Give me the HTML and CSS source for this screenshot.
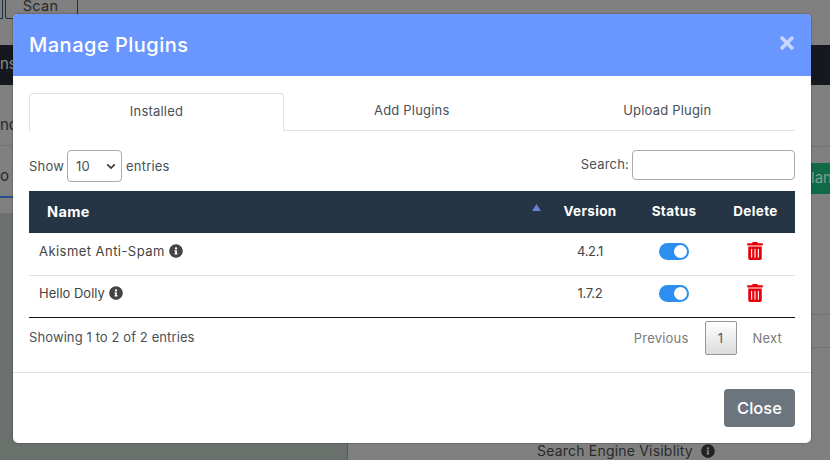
FILE: index.html
```html
<!DOCTYPE html>
<html lang="en">
<head>
<meta charset="utf-8">
<title>Manage Plugins</title>
<link rel="stylesheet" href="styles.css">
</head>
<body>
<div class="page">
  <div class="topbar"><span class="edge-btn"></span><button class="scan-btn">Scan</button></div>
  <div class="navbar">ns</div>
  <div class="content">
    <div class="left">
      <div class="left-row row-a">nc</div>
      <div class="left-row row-b">o</div>
      <div class="left-fill"></div>
    </div>
    <div class="right">
      <div class="right-row r1"><span class="green">lan</span></div>
      <div class="right-row r2"></div>
      <div class="right-row r3"></div>
      <div class="seo">Search Engine Visiblity
        <svg class="info" viewBox="0 0 512 512"><use href="#i-info"/></svg>
      </div>
    </div>
  </div>
</div>

<svg class="defs" width="0" height="0">
  <defs>
    <path id="i-info" d="M256 8C119 8 8 119 8 256s111 248 248 248 248-111 248-248S393 8 256 8zm0 110c23.196 0 42 18.804 42 42s-18.804 42-42 42-42-18.804-42-42 18.804-42 42-42zm56 254c0 6.627-5.373 12-12 12h-88c-6.627 0-12-5.373-12-12v-24c0-6.627 5.373-12 12-12h12v-64h-12c-6.627 0-12-5.373-12-12v-24c0-6.627 5.373-12 12-12h64c6.627 0 12 5.373 12 12v100h12c6.627 0 12 5.373 12 12v24z"/>
    <path id="i-trash" d="M32 464a48 48 0 0 0 48 48h288a48 48 0 0 0 48-48V128H32zm272-256a16 16 0 0 1 32 0v224a16 16 0 0 1-32 0zm-96 0a16 16 0 0 1 32 0v224a16 16 0 0 1-32 0zm-96 0a16 16 0 0 1 32 0v224a16 16 0 0 1-32 0zM432 32H312l-9.4-18.7A24 24 0 0 0 281.1 0H166.8a23.72 23.72 0 0 0-21.4 13.3L136 32H16A16 16 0 0 0 0 48v32a16 16 0 0 0 16 16h416a16 16 0 0 0 16-16V48a16 16 0 0 0-16-16z"/>
  </defs>
</svg>

<div class="modal">
  <header class="modal-head">
    <h5 class="modal-title">Manage Plugins</h5>
    <svg class="close-x" viewBox="0 0 352 512"><path d="M242.72 256l100.07-100.07c12.28-12.28 12.28-32.19 0-44.48l-22.24-22.24c-12.28-12.28-32.19-12.28-44.48 0L176 189.28 75.93 89.21c-12.28-12.28-32.19-12.28-44.48 0L9.21 111.45c-12.28 12.28-12.28 32.19 0 44.48L109.28 256 9.21 356.07c-12.28 12.28-12.28 32.19 0 44.48l22.24 22.24c12.28 12.28 32.2 12.28 44.48 0L176 322.72l100.07 100.07c12.28 12.28 32.2 12.28 44.48 0l22.24-22.24c12.28-12.28 12.28-32.19 0-44.48L242.72 256z"/></svg>
  </header>
  <div class="modal-body">
    <nav class="tabs">
      <a class="tab active">Installed</a>
      <a class="tab">Add Plugins</a>
      <a class="tab">Upload Plugin</a>
    </nav>
    <div class="controls">
      <label class="length">Show
        <span class="select">10
          <svg class="chev" viewBox="0 0 12 8"><path d="M1.5 1.5 6 6l4.5-4.5" fill="none" stroke="#3a3a3a" stroke-width="2"/></svg>
        </span>
        entries</label>
      <label class="search"><span class="search-label">Search:</span><input class="search-input" type="text"></label>
    </div>
    <table class="plugins">
      <colgroup><col class="c-name"><col class="c-ver"><col class="c-stat"><col class="c-del"></colgroup>
      <thead>
        <tr>
          <th class="th-name">Name<svg class="sort" viewBox="0 0 10 8"><path d="M5 0l5 8H0z"/></svg></th>
          <th>Version</th><th>Status</th><th>Delete</th>
        </tr>
      </thead>
      <tbody>
        <tr>
          <td class="td-name wide">Akismet Anti-Spam <svg class="info" viewBox="0 0 512 512"><use href="#i-info"/></svg></td>
          <td class="center ver">4.2.1</td>
          <td class="center"><span class="toggle"></span></td>
          <td class="center"><svg class="trash" viewBox="0 0 448 512"><use href="#i-trash"/></svg></td>
        </tr>
        <tr>
          <td class="td-name tight">Hello Dolly <svg class="info" viewBox="0 0 512 512"><use href="#i-info"/></svg></td>
          <td class="center ver">1.7.2</td>
          <td class="center"><span class="toggle"></span></td>
          <td class="center"><svg class="trash" viewBox="0 0 448 512"><use href="#i-trash"/></svg></td>
        </tr>
      </tbody>
    </table>
    <div class="table-foot">
      <span class="summary">Showing 1 to 2 of 2 entries</span>
      <div class="pager">
        <span class="pg">Previous</span>
        <span class="pg-num">1</span>
        <span class="pg">Next</span>
      </div>
    </div>
  </div>
  <footer class="modal-foot"><button class="close-btn">Close</button></footer>
</div>
</body>
</html>
```
FILE: styles.css
```css
* { box-sizing: border-box; }
html, body { margin: 0; height: 100%; overflow: hidden; }
body { background: #808080; font-family: Inter, "Noto Sans", sans-serif; color: #444; position: relative; }

.page { width: 830px; height: 460px; display: flex; flex-direction: column; color: #2a2a2a; font-size: 14px; overflow: hidden; }
.topbar { height: 45px; display: flex; align-items: flex-start; gap: 2px; flex: none; }
.edge-btn { width: 3px; height: 19px; border: 1px solid #20304a; border-left: 0; border-top: 0; }
.scan-btn { width: 73px; height: 19px; border: 1px solid #20304a; border-top: 0; background: none; border-radius: 0 0 3px 3px; font: 14.5px Inter, sans-serif; letter-spacing: .3px; color: #2a2a2a; padding: 0 2px 13px 0; line-height: 12px; display: block; overflow: hidden; }
.navbar { height: 40px; flex: none; background: #15191f; color: #8a8a8a; line-height: 38px; font-size: 15px; }
.content { flex: 1; display: grid; grid-template-columns: 348px 1fr; }
.left { display: flex; flex-direction: column; border-right: 1px solid #5a5a5a; }
.left-row { line-height: 40px; font-size: 15px; }
.row-a { height: 61px; padding-top: 20px; border-bottom: 1px solid #747474; }
.row-b { height: 52px; border-bottom: 2px solid #26508f; padding-top: 10px; }
.left-fill { flex: 1; margin-top: 15px; background: #6a716c; border-top: 1px solid #707070; }
.right { display: flex; flex-direction: column; }
.right-row { border-bottom: 1px solid #737373; }
.r1 { padding-top: 16px; display: flex; justify-content: flex-end; border: 0; border-top: 1px solid #737373; margin-top: 61px; height: 62px; }
.r2 { height: 107px; }
.r3 { height: 33px; }
.green { background: #0f6a45; color: #7f9f90; height: 31px; width: 26px; padding-left: 7px; line-height: 30px; font-size: 15px; overflow: hidden; }
.seo { padding: 0 0 0 189px; margin-top: 90px; font-size: 14px; line-height: 26px; white-space: nowrap; letter-spacing: .2px; }
.seo .info { fill: #222; margin-left: 4px; }

.defs { position: absolute; }
.modal { position: absolute; left: 13px; top: 14px; width: 798px; height: 429px; background: #fff; border-radius: 5px; box-shadow: 0 0 2px rgba(0,0,0,.5); overflow: hidden; display: flex; flex-direction: column; }
.modal-head { height: 62px; flex: none; background: #6a96ff; display: flex; align-items: center; justify-content: space-between; padding: 0 17px 0 16px; }
.modal-title { margin: 0; font-size: 20px; font-weight: 500; color: #fff; letter-spacing: .5px; }
.close-x { width: 14px; height: 20px; fill: #c6d6ff; margin-bottom: 4px; }

.modal-body { flex: 1; padding: 17px 16px 0; }
.tabs { display: grid; grid-template-columns: 255px 1fr 1fr; height: 38px; border-bottom: 1px solid #dee2e6; }
.tab { font-size: 13px; color: #495057; text-align: center; line-height: 35px; letter-spacing: .2px; }
.tab.active { border: 1px solid #dee2e6; border-bottom: 0; height: 38px; background: #fff; border-radius: 4px 4px 0 0; }
.controls { display: flex; justify-content: space-between; align-items: flex-start; margin-top: 19px; height: 41px; font-size: 13px; color: #495057; letter-spacing: .2px; }
.length { display: flex; align-items: center; gap: 3px; height: 32px; }
.select { width: 55px; height: 32px; border: 1px solid #a9a9a9; border-radius: 4px; padding-left: 8px; display: flex; align-items: center; justify-content: space-between; padding-right: 5px; margin-right: 1px; }
.chev { width: 10px; height: 7px; }
.search { display: flex; align-items: center; gap: 3px; height: 30px; }
.search-label { margin-bottom: 2px; }
.search-input { width: 163px; height: 30px; border: 1px solid #a9a9a9; border-radius: 4px; background: #fff; padding: 0; flex: none; }

.plugins { width: 766px; border-collapse: collapse; table-layout: fixed; font-size: 13px; color: #444; }
.c-name { width: 519px; } .c-ver { width: 84px; } .c-stat { width: 84px; } .c-del { width: 79px; }
.plugins thead tr { background: #253545; height: 42px; }
.plugins th { color: #fff; font-size: 13.5px; font-weight: 700; text-align: center; padding: 0 0 2px; letter-spacing: .35px; }
.th-name { text-align: left !important; padding-left: 18px !important; position: relative; font-size: 14.5px !important; }
.sort { position: absolute; left: 503px; top: 13px; width: 9px; height: 7px; fill: #6a7fd8; }
.plugins tbody tr { height: 42px; border-bottom: 1px solid #dee2e6; }
.plugins tbody tr:last-child { border-bottom: 1px solid #111; }
.plugins td { padding: 0 0 6px; letter-spacing: .2px; }
.plugins td.ver { letter-spacing: -.3px; }
.td-name { padding-left: 10px !important; }
.wide { letter-spacing: .45px !important; }
.tight { letter-spacing: 0 !important; }
.center { text-align: center; }
.info { width: 14px; height: 14px; fill: #444; vertical-align: -2px; }
.toggle { display: inline-block; width: 30px; height: 17px; background: #2c8fef; border-radius: 9px; position: relative; vertical-align: middle; }
.toggle::after { content: ""; position: absolute; right: 2px; top: 2px; width: 13px; height: 13px; border-radius: 50%; background: #fff; }
.trash { width: 16px; height: 18px; fill: #e8000b; vertical-align: middle; margin-right: 2px; }

.table-foot { display: flex; justify-content: space-between; align-items: center; height: 40px; font-size: 13px; color: #495057; letter-spacing: .1px; }
.summary { margin-bottom: 2px; }
.pager { display: flex; align-items: center; height: 34px; font-size: 13px; letter-spacing: .2px; }
.pg { color: #7a7a7a; padding: 0 16px; }
.pg:last-child { padding-right: 13px; }
.pg-num { width: 32px; height: 34px; border: 1px solid #979797; background: linear-gradient(#fff, #dcdcdc); color: #555; display: flex; align-items: center; justify-content: center; border-radius: 2px; }

.modal-foot { height: 71px; flex: none; border-top: 1px solid #dee2e6; display: flex; justify-content: flex-end; align-items: center; padding: 0 16px; }
.close-btn { width: 71px; height: 38px; background: #6c757d; color: #fff; border: 0; border-radius: 4px; font: 500 16.5px Inter, sans-serif; }
```
